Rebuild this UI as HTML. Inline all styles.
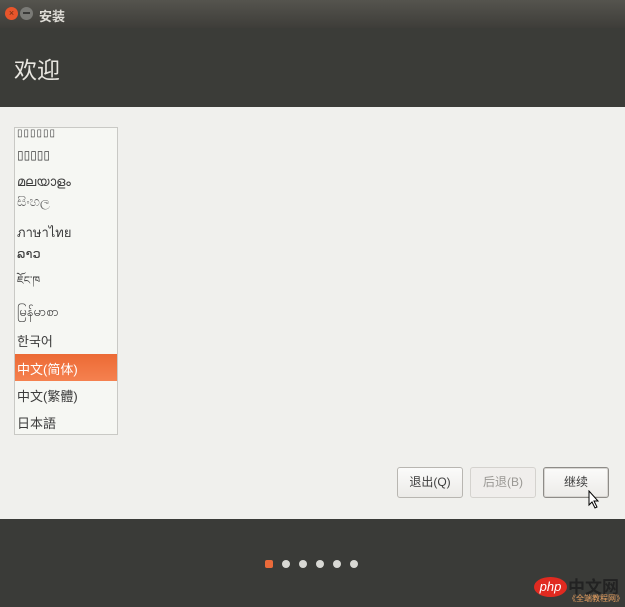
<!DOCTYPE html>
<html style="overflow:hidden"><head><meta charset="utf-8"><style>
*{margin:0;padding:0;box-sizing:border-box}
html,body{width:625px;height:607px;overflow:hidden}
body{font-family:"Liberation Sans","Noto Sans CJK SC",sans-serif;background:#f0f0ed;position:relative}
.tb{position:absolute;left:0;top:0;width:625px;height:28px;background:linear-gradient(#55544e,#3e3d39);}
.hd{position:absolute;left:0;top:28px;width:625px;height:79px;background:#3b3c38}
.ft{position:absolute;left:0;top:519px;width:625px;height:88px;background:#3a3b38}
.list{position:absolute;left:14px;top:127px;width:104px;height:308px;background:#f6f7f3;border:1px solid #c9c9c5;overflow:hidden}
.r{position:absolute;left:2px;font-size:13px;color:#3c3c3c;white-space:nowrap}
.sel{position:absolute;left:0;top:226px;width:102px;height:27px;background:linear-gradient(#ec6a35,#f5814f)}
.btn{position:absolute;top:467px;width:66px;height:31px;border:1px solid #b8b6b1;border-radius:3px;background:linear-gradient(#fbfbfa,#ecebe8);font-size:12px;color:#3c3c3c;text-align:center;line-height:29px}
.dot{position:absolute;top:560px;width:8px;height:8px;border-radius:50%;background:#d8d8d4}
</style></head><body>
<div class="tb">
<div style="position:absolute;left:5px;top:7px;width:13px;height:13px;border-radius:50%;background:#e8552b;font-size:9px;color:#6a2a10;text-align:center;line-height:13px">×</div>
<div style="position:absolute;left:20px;top:7px;width:13px;height:13px;border-radius:50%;background:#7a7a76;"><div style="position:absolute;left:3px;top:5px;width:7px;height:2px;background:#3a3a38"></div></div>
<div style="position:absolute;left:39px;top:6px;font-size:13px;font-weight:bold;color:#e0ded8">安装</div>
</div>
<div class="hd"><div style="position:absolute;left:14px;top:23px;font-size:23px;color:#e8e6e0">欢迎</div></div>
<div class="list">
<div class="r" style="top:0px;font-size:10px;letter-spacing:1px">▯▯▯▯▯▯</div>
<div class="r" style="top:20px;font-size:12px">▯▯▯▯▯</div>
<div class="r" style="top:46px">മലയാളം</div>
<div class="r" style="top:66px;color:#666">සිංහල</div>
<div class="r" style="top:94px">ภาษาไทย</div>
<div class="r" style="top:118px">ລາວ</div>
<div class="r" style="top:140px;font-size:11px">ཇོང་ཁ</div>
<div class="r" style="top:176px">မြန်မာစာ</div>
<div class="r" style="top:203px">한국어</div>
<div class="sel"></div>
<div class="r" style="top:231px;color:#fff">中文(简体)</div>
<div class="r" style="top:258px">中文(繁體)</div>
<div class="r" style="top:285px">日本語</div>
</div>
<div class="btn" style="left:397px">退出(Q)</div>
<div class="btn" style="left:470px;color:#9a9894;background:#f0eeec;border-color:#d4d2ce">后退(B)</div>
<div class="btn" style="left:543px;border-color:#8e8c88;box-shadow:inset 0 0 0 1px #d8d6d2">继续</div>
<svg style="position:absolute;left:588px;top:490px" width="12" height="20" viewBox="0 0 12 20"><path d="M1 1 L1 15 L4 12 L7 18 L9 17 L6 11 L10 11 Z" fill="#fff" stroke="#000" stroke-width="1"/></svg>
<div class="ft"></div>
<div class="dot" style="left:265px;background:#ea6a3a;border-radius:2px"></div>
<div class="dot" style="left:282px"></div>
<div class="dot" style="left:299px"></div>
<div class="dot" style="left:316px"></div>
<div class="dot" style="left:333px"></div>
<div class="dot" style="left:350px"></div>
<div style="position:absolute;left:534px;top:577px;width:33px;height:20px;border-radius:50%;background:#e02a20;color:#fff;font-size:13px;font-style:italic;text-align:center;line-height:19px">php</div>
<div style="position:absolute;left:568px;top:573px;font-size:17px;color:#222;font-weight:bold;white-space:nowrap">中文网</div>
<div style="position:absolute;left:568px;top:594px;font-size:8px;line-height:9px;color:#e8a060;white-space:nowrap">《全端教程网》</div>
</body></html>
